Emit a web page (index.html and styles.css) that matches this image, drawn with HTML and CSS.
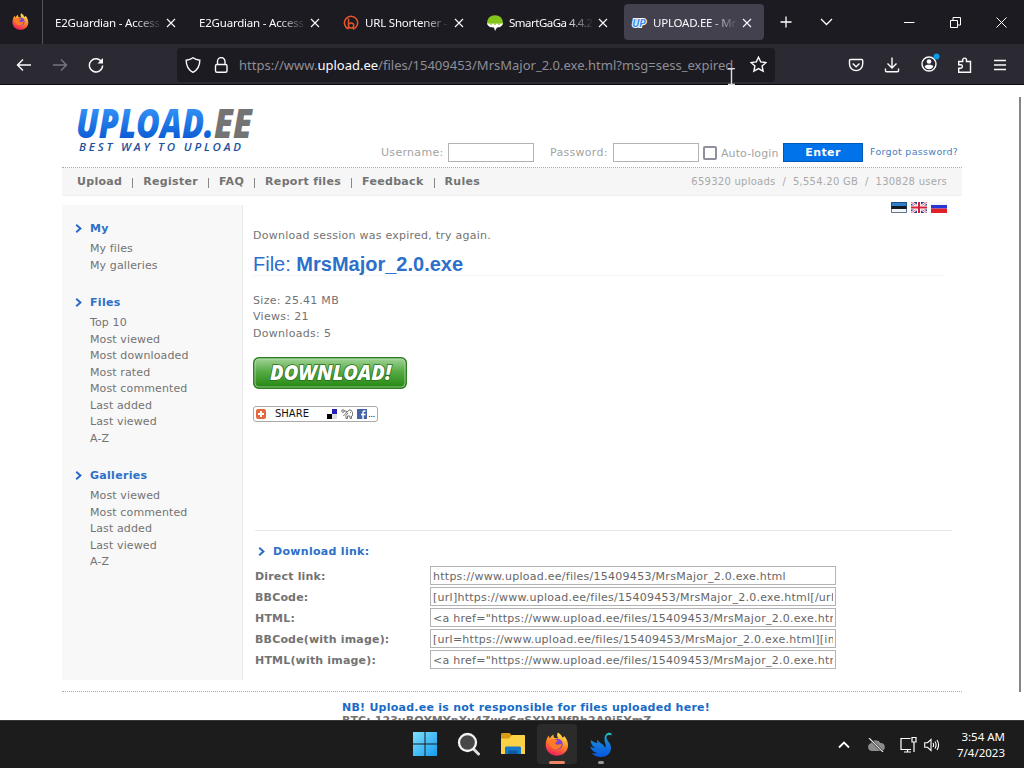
FILE: index.html
```html
<!DOCTYPE html>
<html lang="en">
<head>
  <meta charset="UTF-8">
  <title>UPLOAD.EE - MrsMajor_2.0.exe - Download</title>
  <link rel="stylesheet" href="styles.css">
</head>
<body>
  <svg width="0" height="0" class="defs">
    <defs>
      <linearGradient id="fire" x1="0.7" y1="0" x2="0.3" y2="1"><stop offset="0" stop-color="#fff04f"/><stop offset=".45" stop-color="#ff8a24"/><stop offset="1" stop-color="#ef1960"/></linearGradient>
      <symbol id="firefox" viewBox="0 0 24 24">
        <path fill="url(#fire)" d="M13 .5c3 1.800 4 4 4.300 5C19 5.200 19 4 19 4c3.300 3 4.600 8 3.800 11.500C21.700 20.500 17 23.700 12 23.700 5.500 23.700.7 19 .7 13c0-4 1.300-7.200 3-9.500.2 1.300.6 2.200 1.300 2.800 1-1.800 2-3 3.600-3.800-.2 1.500 0 2.500 1 3.500 1.500-.3 2.800 0 3.600.5C11.700 4.300 11.800 2 13 .5z"/>
        <circle cx="12.500" cy="12" r="5.200" fill="#7b45cf"/>
        <path fill="#ff7a27" d="M4.500 9c1.700-2.300 4.200-2.600 6-1.300l2.300.7c-.4 1.500-2.300 1.600-2.500 2.800 1.700 2.800 4.300 1.200 6.500.4-.3 3.700-3 5.900-6.300 5.700-4-.3-6.500-4.300-6-8.300z"/>
      </symbol>
      <symbol id="chev" viewBox="0 0 7 9"><path d="M1.200 .8l4.200 3.700-4.200 3.700" fill="none" stroke="#2b6cc4" stroke-width="2"/></symbol>
      <symbol id="x" viewBox="0 0 10 10"><path d="M1 1l8 8M9 1l-8 8" stroke="#fbfbfe" stroke-width="1.100"/></symbol>
    </defs>
  </svg>

  <div class="tabbar">
    <div class="home-tab"><svg width="17" height="17"><use href="#firefox"/></svg></div>
    <div class="tab"><span class="title">E2Guardian - Access</span><svg class="close" width="10" height="10"><use href="#x"/></svg></div>
    <div class="tab"><span class="title">E2Guardian - Access</span><svg class="close" width="10" height="10"><use href="#x"/></svg></div>
    <div class="tab">
      <svg class="fav" width="16" height="16" viewBox="0 0 16 16" fill="none" stroke="#e8572b" stroke-width="1.500"><path d="M5.500 14A6.600 6.600 0 1 1 10 14.200M5.500 3.500v10M5.500 9.500C7 7 10.700 7.500 10.700 10.500S7 14 5.500 11.500"/></svg>
      <span class="title">URL Shortener -</span><svg class="close" width="10" height="10"><use href="#x"/></svg>
    </div>
    <div class="tab">
      <svg class="fav" width="16" height="16" viewBox="0 0 16 16"><path d="M0 9C0 3 3.500.3 8 .3S16 3 16 9z" fill="#84c51b"/><path d="M0 8.500h16c-1 3.500-4 4-6 4L8 16l-1-3.500c-3 0-6-.5-7-4z" fill="#fff"/><path d="M2 8.500L4 10l2-1.500M6 8.500L8 10l2-1.500M10 8.500l2 1.500 2-1.500" fill="#84c51b"/></svg>
      <span class="title narrow">SmartGaGa 4.4.2</span><svg class="close" width="10" height="10"><use href="#x"/></svg>
    </div>
    <div class="tab active">
      <span class="fav up">UP</span>
      <span class="title">UPLOAD.EE - Mrs</span><svg class="close" width="10" height="10"><use href="#x"/></svg>
    </div>
    <svg class="plus" width="12" height="12" viewBox="0 0 12 12"><path d="M6 .5v11M.5 6h11" stroke="#fff" stroke-width="1.300"/></svg>
    <svg class="down" width="13" height="8" viewBox="0 0 13 8"><path d="M1 1l5.500 5.500L12 1" fill="none" stroke="#fff" stroke-width="1.300"/></svg>
    <div class="window-buttons">
      <svg width="11" height="11" viewBox="0 0 11 11"><path d="M0 5.500h10.500" stroke="#fff"/></svg>
      <svg width="11" height="11" viewBox="0 0 11 11" fill="none" stroke="#fff"><path d="M.5 3.500h7v7h-7zM3 3V.5h7.500V8H8"/></svg>
      <svg width="11" height="11" viewBox="0 0 11 11"><path d="M.5.5l10 10M10.500.5l-10 10" stroke="#fff"/></svg>
    </div>
  </div>

  <div class="toolbar">
    <div class="nav-buttons">
      <svg width="16" height="16" viewBox="0 0 16 16"><path d="M15 8H1.500M7 2.500L1.500 8 7 13.500"/></svg>
      <svg class="off" width="16" height="16" viewBox="0 0 16 16"><path d="M1 8h13.500M9 2.500L14.500 8 9 13.500"/></svg>
      <svg width="16" height="16" viewBox="0 0 16 16"><path d="M13.800 5.200A6.600 6.600 0 1 0 14.600 8.500"/><path d="M15 1v5.500H9.500z" fill="#fbfbfe" stroke="none"/></svg>
    </div>
    <div class="urlbar">
      <svg width="16" height="16" viewBox="0 0 16 16"><path d="M8 .8c2 1.600 4.300 2.300 6.800 2.400C14.800 9 12.500 13 8 15.300 3.500 13 1.200 9 1.200 3.200 3.700 3.100 6 2.400 8 .8z"/></svg>
      <svg width="16" height="16" viewBox="0 0 16 16"><rect x="2.500" y="7.500" width="11.500" height="7.800" rx="1.500"/><path d="M4.500 7.500V4.300a3.750 3.750 0 0 1 7.500 0v3.200"/></svg>
      <span class="url">https://www.<b>upload.ee</b>/files/15409453/MrsMajor_2.0.exe.html?msg=sess_expired</span>
      <svg class="star" width="17" height="17" viewBox="0 0 17 17"><path d="M8.500 1.200l2.200 4.700 5.200.6-3.800 3.500 1 5.100-4.600-2.500-4.600 2.500 1-5.100L1.100 6.500l5.200-.6z"/></svg>
    </div>
    <div class="tools">
      <svg width="16" height="16" viewBox="0 0 16 16"><path d="M2.500 2.500h11.200a1 1 0 0 1 1 1V7a6.600 6.600 0 0 1-13.200 0V3.500a1 1 0 0 1 1-1zM4.700 6.500l3.400 3.200 3.400-3.200"/></svg>
      <svg width="16" height="16" viewBox="0 0 16 16"><path d="M8 .5v10M3.500 6.500L8 11l4.500-4.500M1.500 11.500v2.300c0 .6.400 1 1 1h11c.6 0 1-.4 1-1v-2.300"/></svg>
      <svg width="20" height="20" viewBox="0 0 20 20"><circle cx="9" cy="11" r="7"/><g fill="#fbfbfe" stroke="none"><circle cx="9" cy="8.500" r="2.300"/><path d="M4.700 13.500c0-2.200 8.600-2.200 8.600 0-.8 1.700-2.300 2.700-4.300 2.700s-3.500-1-4.300-2.700z"/></g><circle cx="16.500" cy="3.500" r="3" fill="#0b9be8" stroke="none"/></svg>
      <svg width="16" height="16" viewBox="0 0 16 16"><path d="M1.700 4.500h4V3a1.900 1.900 0 0 1 3.800 0v1.500h4v10.700H1.700v-4h2a1.700 1.700 0 0 0 0-3.400h-2z"/></svg>
      <svg width="14" height="16" viewBox="0 0 14 16"><path d="M1 3.500h12M1 8h12M1 12.500h12"/></svg>
    </div>
    <svg class="cursor" width="7" height="17" viewBox="0 0 7 17"><path d="M0 .5h2.500l1 .5 1-.5H7M3.500 1v15M0 16.500h2.500l1-.5 1 .5H7" fill="none" stroke="#ddd"/></svg>
  </div>

  <div class="viewport">
    <div class="page">
      <div class="header">
        <svg class="logo" width="184" height="54" viewBox="0 0 184 54">
          <defs><linearGradient id="blue" x1="0" y1="0" x2="0" y2="1"><stop offset=".2" stop-color="#3794f8"/><stop offset=".8" stop-color="#0a5cd4"/></linearGradient></defs>
          <text class="logo-name" x="1" y="35" textLength="138" lengthAdjust="spacingAndGlyphs" fill="url(#blue)">UPLOAD.</text>
          <text class="logo-name" x="139" y="35" textLength="38" lengthAdjust="spacingAndGlyphs" fill="#747474">EE</text>
          <text class="logo-sub" x="4" y="48" textLength="162">BEST WAY TO UPLOAD</text>
        </svg>
        <div class="login">
          <span class="lbl">Username:</span><input type="text">
          <span class="lbl pass">Password:</span><input type="text">
          <span class="check"></span><span class="lbl auto">Auto-login</span>
          <span class="enter">Enter</span>
          <span class="forgot">Forgot password?</span>
        </div>
      </div>
      <div class="menu">
        <div class="menu-links"><b>Upload</b><i></i><b>Register</b><i></i><b>FAQ</b><i></i><b>Report files</b><i></i><b>Feedback</b><i></i><b>Rules</b></div>
        <div class="stats">659320 uploads &nbsp;/&nbsp; 5,554.20 GB &nbsp;/&nbsp; 130828 users</div>
      </div>
      <div class="columns">
        <div class="sidebar">
          <h3><svg width="7" height="9"><use href="#chev"/></svg>My</h3>
          <ul>
            <li>My files</li>
            <li>My galleries</li>
          </ul>
          <h3><svg width="7" height="9"><use href="#chev"/></svg>Files</h3>
          <ul>
            <li>Top 10</li>
            <li>Most viewed</li>
            <li>Most downloaded</li>
            <li>Most rated</li>
            <li>Most commented</li>
            <li>Last added</li>
            <li>Last viewed</li>
            <li>A-Z</li>
          </ul>
          <h3><svg width="7" height="9"><use href="#chev"/></svg>Galleries</h3>
          <ul>
            <li>Most viewed</li>
            <li>Most commented</li>
            <li>Last added</li>
            <li>Last viewed</li>
            <li>A-Z</li>
          </ul>
        </div>
        <div class="main">
          <div class="flags">
            <svg width="16" height="11" viewBox="0 0 16 11"><path fill="#2f7fd0" d="M0 0h16v4H0z"/><path fill="#151a20" d="M0 4h16v3H0z"/><path fill="#f5f5f5" d="M0 7h16v4H0z"/><path d="M.5.500h15v10H.5z" fill="none" stroke="#1c3c63" stroke-opacity=".7"/></svg>
            <svg width="16" height="11" viewBox="0 0 16 11"><path fill="#32418c" d="M0 0h16v11H0z"/><path d="M0 0l16 11M16 0L0 11" stroke="#fff" stroke-width="2.500"/><path d="M0 0l16 11M16 0L0 11" stroke="#d63a50" stroke-width=".8"/><path d="M8 0v11M0 5.500h16" stroke="#fff" stroke-width="4"/><path d="M8 0v11M0 5.500h16" stroke="#d8203b" stroke-width="2"/></svg>
            <svg width="16" height="11" viewBox="0 0 16 11"><path fill="#f5f5f5" d="M0 0h16v3H0z"/><path fill="#2436d8" d="M0 3h16v3.500H0z"/><path fill="#e0202b" d="M0 6.500h16V11H0z"/></svg>
          </div>
          <p class="message">Download session was expired, try again.</p>
          <h1>File: <b>MrsMajor_2.0.exe</b></h1>
          <p class="info">Size: 25.41 MB<br>Views: 21<br>Downloads: 5</p>
          <svg class="download" width="154" height="32" viewBox="0 0 154 32">
            <defs><linearGradient id="green" x1="0" y1="0" x2="0" y2="1"><stop offset="0" stop-color="#a5d59a"/><stop offset=".45" stop-color="#57ab45"/><stop offset="1" stop-color="#22850f"/></linearGradient></defs>
            <rect x=".75" y=".75" width="152.500" height="30.500" rx="5" fill="url(#green)" stroke="#2e7d22" stroke-width="1.500"/>
            <rect x="2" y="2" width="150" height="28" rx="4" fill="none" stroke="#b9e0b0" stroke-opacity=".7"/>
            <text x="17" y="23" textLength="121" lengthAdjust="spacingAndGlyphs">DOWNLOAD!</text>
          </svg>
          <div class="share">
            <svg width="10" height="10" viewBox="0 0 10 10"><rect width="10" height="10" rx="2" fill="#e2693e"/><path d="M5 2v6M2 5h6" stroke="#fff" stroke-width="2"/></svg>
            <span>SHARE</span>
            <svg width="10" height="10" viewBox="0 0 10 10"><path fill="#ddd" d="M0 0h10v10H0z"/><path fill="#261fb5" d="M5 0h5v5H5z"/><path fill="#000" d="M0 5h5v5H0z"/><path fill="#fff" d="M0 0h5v5H0z"/></svg>
            <svg width="12" height="10" viewBox="0 0 12 10" fill="none" stroke="#666" stroke-width=".9"><circle cx="2" cy="2" r="1.300"/><path d="M3.300 2h2v2l-3 3M5.300 4L8 1h2l1.500 2.500v3L10.500 7v2.500H9V7H6.500v2.500H5V6.500L7 4M9 3.500h1"/></svg>
            <svg width="10" height="10" viewBox="0 0 10 10"><path fill="#4662a6" d="M0 0h10v10H0z"/><path d="M8.500 2H7.300Q6 2 6 3.300V10M4 5.500h4.500" fill="none" stroke="#fff" stroke-width="1.400"/></svg>
            <em>...</em>
          </div>
          <div class="links">
            <h3><svg width="7" height="9"><use href="#chev"/></svg>Download link:</h3>
            <div class="row"><label>Direct link:</label><input type="text" value="https://www.upload.ee/files/15409453/MrsMajor_2.0.exe.html"></div>
            <div class="row"><label>BBCode:</label><input type="text" value="[url]https://www.upload.ee/files/15409453/MrsMajor_2.0.exe.html[/url]"></div>
            <div class="row"><label>HTML:</label><input type="text" value="&lt;a href=&quot;https://www.upload.ee/files/15409453/MrsMajor_2.0.exe.html&quot;&gt;"></div>
            <div class="row"><label>BBCode(with image):</label><input type="text" value="[url=https://www.upload.ee/files/15409453/MrsMajor_2.0.exe.html][img]"></div>
            <div class="row"><label>HTML(with image):</label><input type="text" value="&lt;a href=&quot;https://www.upload.ee/files/15409453/MrsMajor_2.0.exe.html&quot;&gt;"></div>
          </div>
        </div>
      </div>
      <div class="footer">
        <div class="nb">NB! Upload.ee is not responsible for files uploaded here!</div>
        <div class="btc">BTC: 123uBQYMYnXv4Zwg6gSXV1NfRh2A9j5YmZ</div>
      </div>
    </div>
    <div class="scroll"></div>
  </div>

  <div class="taskbar">
    <div class="apps">
      <div class="app">
        <svg width="24" height="24" viewBox="0 0 24 24"><defs><linearGradient id="win" x1="0" y1="0" x2="1" y2="1"><stop offset="0" stop-color="#7fe0fb"/><stop offset="1" stop-color="#159bf0"/></linearGradient></defs><path fill="url(#win)" d="M0 0h11.500v11.500H0zM12.500 0H24v11.500H12.500zM0 12.500h11.500V24H0zM12.500 12.500H24V24H12.500z"/></svg>
      </div>
      <div class="app">
        <svg width="24" height="24" viewBox="0 0 24 24"><path d="M16.500 17l5 5" stroke="#ddd" stroke-width="3" stroke-linecap="round"/><circle cx="10.500" cy="10.500" r="8.500" fill="#484848" stroke="#f3f3f3" stroke-width="2.300"/></svg>
      </div>
      <div class="app">
        <svg width="26" height="24" viewBox="0 0 26 24"><path fill="#d99b13" d="M1 2.500C1 1.700 1.600 1 2.500 1h7L12 3.500V8H1z"/><path fill="#fbd245" d="M1 6.500h8L12 3h12c.6 0 1 .4 1 1v18H1z"/><path fill="#1678c8" d="M5 22v-6c0-.9.600-1.500 1.500-1.500h13c.9 0 1.500.6 1.500 1.500v6z"/><path fill="#0b599e" d="M8.500 18.500h9V22h-9z"/></svg>
      </div>
      <div class="app current">
        <svg width="24" height="24"><use href="#firefox"/></svg>
      </div>
      <div class="app idle">
        <svg width="24" height="26" viewBox="0 0 24 26"><defs><linearGradient id="swan" x1="0" y1="0" x2="0" y2="1"><stop offset="0" stop-color="#25c3c0"/><stop offset=".4" stop-color="#1680dc"/><stop offset="1" stop-color="#0756e0"/></linearGradient></defs><path fill="url(#swan)" d="M22.500 3.500C20 2.500 17.500 3 17.500 5.500c0 3.500 5 5.500 4.500 11-.5 5-4.500 8.500-10 8.500-4 0-7.500-1.500-9-4 2 .7 3.500.5 5 0C4.500 20 2 18 1.200 14.500c2 1.500 4 1.500 5 1.500-2.700-1.500-4.500-4-4.500-8 2.500 2 4.800 2.600 6.800 3.300C8 10 8 9 8.500 7.500c1 3.500 6.500 4 7.500 8.500 2-2.500-.7-5.500-.5-9.500C15.700 1 20.500-.5 22.500 1.500z"/></svg>
      </div>
    </div>
    <div class="tray">
      <svg width="12" height="8" viewBox="0 0 12 8"><path d="M1 6.500l5-5 5 5" fill="none" stroke="#fff" stroke-width="1.800"/></svg>
      <svg width="18" height="14" viewBox="0 0 18 14"><path fill="#8d8d8d" d="M4.500 13a4 4 0 0 1-.5-7.800A5.300 5.300 0 0 1 13.500 5 4 4 0 0 1 14 13z"/><path d="M2 0l14 14" stroke="#1c1c1c" stroke-width="2.400"/><path d="M2 0l14 14" stroke="#e0e0e0" stroke-width="1.200"/></svg>
      <svg width="17" height="17" viewBox="0 0 17 17" fill="none" stroke="#fff" stroke-width="1.200"><path d="M10.500 2.500H1v11h10M4 16h7M7.500 13.500V16M12 1.500h4V6h-4zM14 6v10"/></svg>
      <svg width="16" height="14" viewBox="0 0 16 14" fill="none" stroke="#fff" stroke-width="1.100"><path d="M.7 4.700h2.800L7 1.500v11L3.500 9.300H.7zM9 5q1.200 2 0 4M11 3.500q2.200 3.500 0 7M13 2q3.200 5 0 10"/></svg>
      <div class="clock">3:54 AM<br>7/4/2023</div>
    </div>
  </div>
</body>
</html>
```
FILE: styles.css
```css
* { box-sizing: border-box; }
body {
  margin: 0;
  width: 1024px;
  height: 768px;
  overflow: hidden;
  display: flex;
  flex-direction: column;
  background: #fff;
  font: 11px/16.5px "DejaVu Sans", Verdana, sans-serif;
  color: #737373;
}
svg { display: block; flex: none; }
.defs { position: absolute; }
h1, h3, p, ul { margin: 0; padding: 0; }

/* browser tabs */
.tabbar {
  height: 44px;
  flex: none;
  display: flex;
  align-items: center;
  background: #1c1b22;
  font: 12px/16px "Noto Sans", "Open Sans", sans-serif;
  color: #fbfbfe;
}
.home-tab {
  width: 43px;
  height: 44px;
  padding: 13px 0 0 12px;
  border-right: 1px solid #55545b;
  margin-right: 5px;
}
.tab {
  width: 140px;
  height: 36px;
  margin-right: 4px;
  padding: 1px 12px 0 7px;
  display: flex;
  align-items: center;
  border-radius: 4px;
}
.tab.active { background: #42414d; }
.fav { width: 16px; margin-right: 6px; flex: none; }
.up {
  font: italic bold 11px/16px "Open Sans", sans-serif;
  letter-spacing: -0.6px;
  color: #3a8ff0;
  -webkit-text-stroke: 2px #fff;
  paint-order: stroke fill;
  padding-left: 1px;
}
.title {
  flex: 1;
  overflow: hidden;
  white-space: nowrap;
  font-size: 11.5px;
  letter-spacing: -0.2px;
  margin-right: 4px;
  -webkit-mask-image: linear-gradient(to right, #000 calc(100% - 28px), transparent);
  mask-image: linear-gradient(to right, #000 calc(100% - 28px), transparent);
}
.title.narrow { letter-spacing: -0.5px; }
.plus { margin-left: 12px; }
.down { margin-left: 28px; }
.window-buttons { margin-left: auto; display: flex; gap: 35px; padding-right: 17px; }

.toolbar {
  height: 41px;
  flex: none;
  display: flex;
  align-items: center;
  position: relative;
  background: #2b2a33;
  border-bottom: 1px solid #0c0c0d;
  padding-top: 1px;
}
.toolbar svg { fill: none; stroke: #fbfbfe; stroke-width: 1.4; }
.nav-buttons { display: flex; gap: 20px; padding-left: 16px; width: 177px; }
.nav-buttons .off { stroke: #77767d; }
.urlbar {
  width: 598px;
  height: 34px;
  display: flex;
  align-items: center;
  background: #1c1b22;
  border-radius: 4px;
  padding: 0 8px;
}
.urlbar svg + svg { margin-left: 12px; }
.url {
  flex: 1;
  margin-left: 10px;
  white-space: nowrap;
  font: 13px/20px "Noto Sans", "Open Sans", sans-serif;
  color: #8f8e95;
}
.url b { font-weight: 400; color: #fbfbfe; }
.tools { display: flex; align-items: center; margin-left: auto; padding-right: 17px; gap: 20px; }
.tools svg:nth-child(3) { margin: -4px -3px 0 0; }
.cursor { position: absolute; left: 728px; top: 24px; }

/* upload.ee page */
.viewport { height: 635px; flex: none; overflow: hidden; display: flex; }
.page { width: 900px; margin-left: 62px; flex: none; }
.scroll { width: 2px; height: 595px; margin: 12px 3px 0 auto; background: #858585; }
.header { height: 83px; display: flex; border-bottom: 1px dotted #aaa; }
.logo { margin: 18px 0 0 13px; overflow: visible; }
.logo-name { font: italic 800 40px "Open Sans", sans-serif; }
.logo-sub { font: italic 600 11.5px "Open Sans", sans-serif; fill: #1c4f9c; }
.login { flex: 1; display: flex; align-items: center; margin-left: 122px; padding-top: 53px; height: 82px; color: #a3a3a3; white-space: nowrap; }
.lbl { letter-spacing: 0.3px; width: 67px; flex: none; padding-top: 2px; }
.lbl.pass { margin-left: 16px; width: 63px; }
.lbl.auto { width: 62px; margin-left: 4px; padding-top: 3px; letter-spacing: 0.1px; }
input {
  height: 19px;
  border: 1px solid #b3b3b3;
  background: #fff;
  padding: 1px 2px 0;
  font: 11px "DejaVu Sans", Verdana, sans-serif;
  color: #666;
  border-radius: 0;
  outline: none;
}
.login input { width: 86px; flex: none; }
.check { width: 14px; height: 14px; border: 2px solid #8f8f9d; border-radius: 2px; margin-left: 4px; flex: none; }
.enter { width: 80px; height: 19px; background: #0073ea; border: 1px solid #0058b5; color: #fff; font-weight: bold; letter-spacing: 0.4px; text-align: center; line-height: 18px; flex: none; }
.forgot { font-size: 9.5px; color: #4a80bd; margin-left: 7px; letter-spacing: 0.3px; }

.menu { height: 28px; background: #f6f6f6; border-bottom: 1px solid #eee; display: flex; justify-content: space-between; align-items: center; padding: 2px 15px 0; white-space: nowrap; }
.menu-links { display: flex; align-items: center; letter-spacing: 0.31px; }
.menu-links i { width: 1px; height: 10px; background: #888; margin: 0 10px; }
.stats { font-size: 10px; color: #a9a9a9; letter-spacing: 0.26px; }

.columns { display: flex; height: 485px; padding-top: 9px; }
.sidebar { width: 181px; height: 475px; background: #f8f8f8; border-right: 1px solid #e9e9e9; padding: 16px 0 0 13px; flex: none; }
h3 { font-size: 11px; line-height: 16px; height: 20px; display: flex; color: #2c70c8; letter-spacing: 0.3px; }
h3 svg { margin: 3px 8px 0 0; }
.sidebar ul { list-style: none; padding-left: 15px; letter-spacing: 0.12px; }
.sidebar li { height: 16.5px; }
.sidebar h3 + ul { margin-bottom: 21px; }

.main { flex: 1; padding: 0 10px 0 10px; display: flex; flex-direction: column; align-items: flex-start; }
.flags { display: flex; gap: 4px; align-self: flex-end; margin: -3px 5px 0 0; height: 12px; flex: none; }
.message { margin-top: 14px; letter-spacing: 0.24px; }
h1 { font: 20px/24px "Liberation Sans", Arial, sans-serif; color: #2c70cb; margin-top: 7px; height: 24px; width: 692px; border-bottom: 1px solid #f4f4f4; flex: none; }
.info { margin-top: 17px; letter-spacing: 0.3px; }
.download { margin-top: 15px; }
.download text { font: italic 800 21px "Open Sans", sans-serif; fill: #fff; stroke: #246f18; stroke-width: 1.6; paint-order: stroke; }
.share { margin-top: 17px; width: 125px; height: 16px; border: 1px solid #aaa; border-radius: 3px; display: flex; align-items: center; padding: 0 2px; color: #111; flex: none; }
.share span { font: 10px/14px "DejaVu Sans", sans-serif; margin: 0 18px 0 9px; width: 34px; }
.share svg + svg { margin-left: 4px; }
.share em { font: 9px/10px "DejaVu Sans", sans-serif; margin-left: 1px; letter-spacing: -0.6px; }

.links { margin: 108px 0 0 2px; width: 697px; border-top: 1px solid #e8e8e8; padding-top: 13px; }
.links h3 { padding-left: 3px; height: 22px; }
.row { display: flex; height: 21px; align-items: flex-start; }
.row label { width: 175px; font-weight: bold; line-height: 22px; letter-spacing: 0.18px; }
.row input { width: 406px; height: 19px; letter-spacing: 0.26px; }

.footer { height: 60px; border-top: 1px dotted #aaa; margin-top: 10px; padding: 8px 0 0 280px; font-weight: bold; white-space: nowrap; }
.nb { color: #176bc7; line-height: 16px; letter-spacing: 0.25px; }
.btc { line-height: 10px; letter-spacing: 0.09px; }

/* windows taskbar */
.taskbar { height: 48px; flex: none; background: #1c1c1c; border-top: 1px solid #383838; display: flex; }
.apps { display: flex; gap: 4px; padding: 3px 0 0 405px; }
.app { width: 40px; height: 40px; display: flex; flex-direction: column; align-items: center; padding-top: 8px; border-radius: 4px; }
.current { background: #2b2b2b; }
.current::after { content: ""; width: 16px; height: 3px; border-radius: 2px; background: #ee8567; margin-top: 5px; }
.idle::after { content: ""; width: 6px; height: 3px; border-radius: 2px; background: #999; margin-top: 3px; }
.tray { margin-left: auto; display: flex; align-items: center; padding-right: 19px; }
.tray svg:nth-child(2) { margin-left: 17px; }
.tray svg:nth-child(3) { margin-left: 15px; }
.tray svg:nth-child(4) { margin-left: 7px; }
.clock { margin-left: 15px; width: 50px; font: 11.5px/16px "Noto Sans", "Open Sans", sans-serif; color: #fff; text-align: right; white-space: nowrap; }
```
